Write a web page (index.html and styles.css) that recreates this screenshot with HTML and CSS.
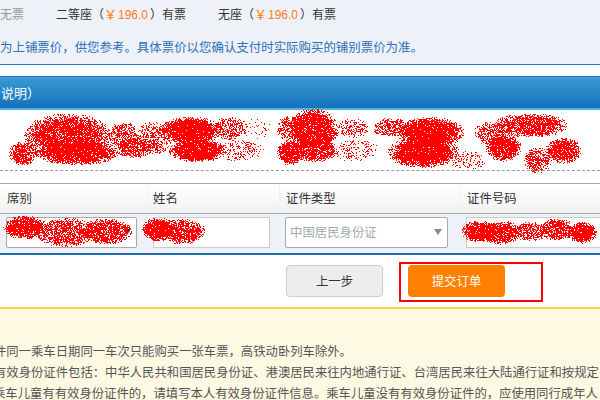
FILE: index.html
```html
<!DOCTYPE html>
<html lang="zh-CN">
<head>
<meta charset="utf-8">
<title>提交订单</title>
<link rel="stylesheet" href="styles.css">
</head>
<body>
<main class="page">
  <section class="tickets">
    <div class="seats">
      <span class="seat seat-none">无票</span>
      <span class="seat seat-second">二等座（<b class="price"><i>￥</i>196.0</b>）有票</span>
      <span class="seat seat-stand">无座（<b class="price"><i>￥</i>196.0</b>）有票</span>
    </div>
    <p class="notice">为上铺票价，供您参考。具体票价以您确认支付时实际购买的铺别票价为准。</p>
  </section>

  <h2 class="bar">说明）</h2>

  <section class="contacts"></section>

  <section class="passenger">
    <div class="thead">
      <div class="th">席别</div>
      <div class="th">姓名</div>
      <div class="th">证件类型</div>
      <div class="th">证件号码</div>
    </div>
    <div class="tbody">
      <div class="field select field-seat"><span class="arrow arrow-dark"></span></div>
      <div class="field input field-name"></div>
      <div class="field select field-type">中国居民身份证<span class="arrow"></span></div>
      <div class="field input field-id"></div>
    </div>
  </section>

  <section class="actions">
    <button class="btn btn-prev" type="button">上一步</button>
    <div class="highlight"><button class="btn btn-submit" type="button">提交订单</button></div>
  </section>

  <section class="tips">
    <p class="tip tip-1">件同一乘车日期同一车次只能购买一张车票，高铁动卧列车除外。</p>
    <p class="tip tip-2">有效身份证件包括：中华人民共和国居民身份证、港澳居民来往内地通行证、台湾居民来往大陆通行证和按规定</p>
    <p class="tip tip-3">乘车儿童有有效身份证件的，请填写本人有效身份证件信息。乘车儿童没有有效身份证件的，应使用同行成年人</p>
  </section>
</main>
<canvas class="scribble" id="scribble" width="600" height="400"></canvas>
<script src="script.js"></script>
</body>
</html>
```
FILE: styles.css
```css
* { box-sizing: border-box; }
html, body { margin: 0; padding: 0; width: 600px; height: 400px; overflow: hidden; background: #fff; }
body { position: relative; font-family: "Noto Sans CJK SC", "Liberation Sans", sans-serif; font-size: 12px; color: #333; }
p, h2 { margin: 0; }

.tickets { height: 65px; background: #eef1f8; border-bottom: 1px solid #1b76c8; padding-top: 5px; }
.seats { display: flex; height: 18px; line-height: 18px; white-space: nowrap; }
.seat-none { width: 56px; color: #999; }
.seat-second { width: 162px; }
.price { font-weight: 400; font-family: "Liberation Sans", sans-serif; color: #ff7a1a; margin-right: 2px; }
.price i { font-style: normal; color: #ff8000; font-size: 13px; margin-right: 1px; }
.notice { margin-top: 15px; line-height: 18px; font-size: 12.45px; color: #2b70b8; white-space: nowrap; }

.bar { margin-top: 11px; height: 34px; padding-left: 1px; line-height: 31px; font-size: 13px; font-weight: 400; color: #fff;
  background: linear-gradient(#3a9bd7, #1571ba); border-top: 1px solid #1b76c8; border-bottom: 2px solid #4cb5e6; }

.contacts { height: 61px; border-bottom: 1px dashed #999; margin-bottom: 12px; }

.passenger { border-top: 1px solid #a8a8a8; }
.thead { display: grid; grid-template-columns: 147px 132px 180px 1fr; height: 30px; background: linear-gradient(#fff, #f1f1f1); border-bottom: 1px solid #a8a8a8; }
.th { padding-left: 7px; line-height: 29px; font-size: 12.4px; color: #333; border-left: 1px solid #f2f2f2; }
.th:first-child { border-left: 0; }
.th:nth-child(2) { padding-left: 5px; }
.th:nth-child(3) { padding-left: 6px; }
.tbody { display: flex; height: 41px; background: #eef1f8; border-bottom: 2px solid #1f6fae; padding: 3px 0 0 6px; }
.field { position: relative; height: 31px; background: #fff; flex: none; }
.select { border: 1px solid #aaa; border-radius: 2px; }
.input { border: 1px solid #ccc; }
.field-seat { width: 131px; margin-right: 16px; }
.field-name { width: 117px; margin-right: 15px; }
.field-type { width: 163px; margin-right: 18px; padding-left: 4px; line-height: 29px; font-size: 12.4px; color: #a3a9b0; }
.field-id { width: 140px; }
.arrow { position: absolute; right: 5px; top: 11px; border-left: 4px solid transparent; border-right: 4px solid transparent; border-top: 6px solid #8a8a8a; }
.arrow-dark { border-top-color: #333; }

.actions { display: flex; align-items: flex-start; height: 52px; padding: 10px 0 0 286px; }
.btn { display: block; height: 32px; padding: 0; font-family: inherit; font-size: 12.4px; border-radius: 4px; }
.btn-prev { width: 97px; background: #eeecec; border: 1px solid #ccc; color: #333; }
.highlight { width: 144px; height: 40px; margin: -3px 0 0 16px; border: 2px solid #f00; padding: 1px 0 0 7px; }
.btn-submit { width: 97px; background: #ff8000; border: 0; color: #fff; }

.tips { height: 93px; background: #fef9e3; border-top: 2px solid #fbd23d; padding-top: 32px; }
.tip { height: 21px; line-height: 21px; font-size: 12.35px; color: #555; white-space: nowrap; margin-left: -6px; }
.tip-3 { margin-left: -7px; }

.scribble { position: absolute; left: 0; top: 0; width: 600px; height: 400px; pointer-events: none; }
```
FILE: script.js
```js
var blobs = [
  [23,153,15,12,.8],[67,135,44,22,.85],[77,152,42,13,.9],[123,135,16,14,.6],[133,148,18,10,.7],
  [153,138,18,17,.5],[190,130,32,14,.95],[197,150,29,12,.95],[230,128,18,12,.55],[240,150,24,11,.28],
  [257,128,16,11,.1],[290,128,14,13,.6],[290,152,14,13,.9],
  [313,130,25,22,.9],[315,150,23,12,.8],[352,128,16,10,.4],[353,150,28,11,.22],
  [390,127,18,10,.55],[430,132,34,16,.95],[423,152,36,16,.95],[467,160,18,10,.22],
  [490,133,17,12,.55],[530,125,38,12,.8],[503,147,18,14,.9],[563,150,18,13,.9],[537,160,14,13,.65],
  [25,227,22,12,.9],[65,232,30,15,.7],[105,231,27,13,.8],
  [158,229,17,12,.95],[182,231,23,13,.8],
  [478,231,17,11,.9],[500,232,21,12,.85],[530,231,18,10,.65],[557,229,18,11,.8],[582,232,15,11,.95]
];
var seed = 1234567;
function rnd() {
  seed = (seed * 1664525 + 1013904223) % 4294967296;
  return seed / 4294967296;
}
var ctx = document.getElementById("scribble").getContext("2d");
ctx.fillStyle = "#ff0000";
blobs.forEach(function (b) {
  for (var y = b[1] - b[3]; y <= b[1] + b[3]; y++) {
    for (var x = b[0] - b[2]; x <= b[0] + b[2]; x++) {
      var dx = (x - b[0]) / b[2], dy = (y - b[1]) / b[3];
      var d = dx * dx + dy * dy;
      if (d > 1) continue;
      var falloff = d < .45 ? 1 : 1 - (d - .45) * 1.5;
      if (rnd() < b[4] * falloff) ctx.fillRect(x, y, 1, 1);
    }
  }
});
```
